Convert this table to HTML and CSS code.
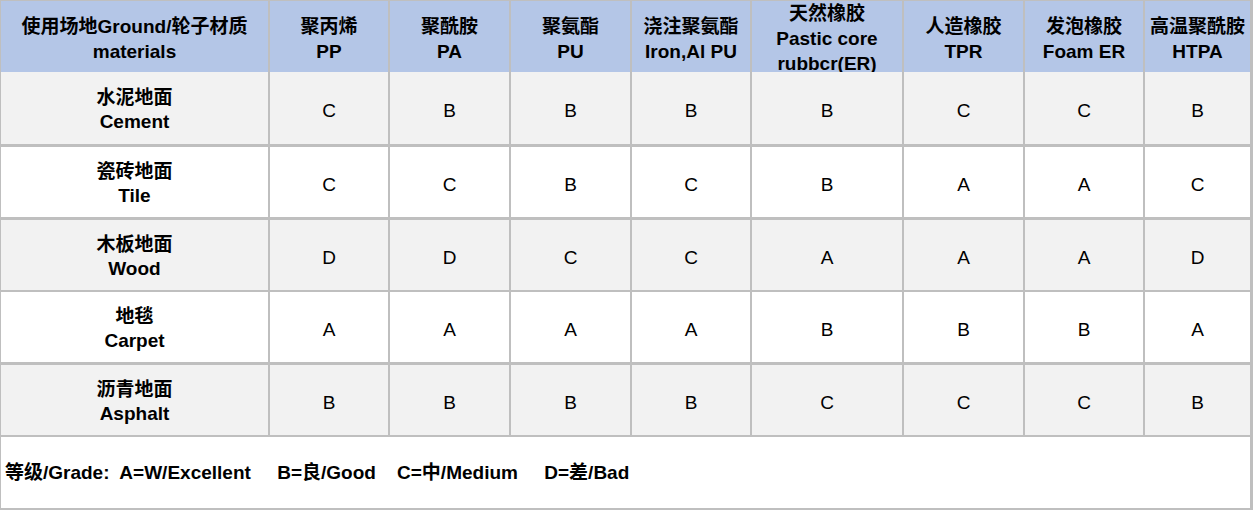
FILE: index.html
```html
<!DOCTYPE html>
<html lang="zh-CN">
<head>
<meta charset="utf-8">
<title>Ground / wheel materials</title>
<link rel="stylesheet" href="styles.css">
</head>
<body>
<div class="table">
  <div class="row head">
    <div class="cell">使用场地Ground/轮子材质<br>materials</div>
    <div class="cell">聚丙烯<br>PP</div>
    <div class="cell">聚酰胺<br>PA</div>
    <div class="cell">聚氨酯<br>PU</div>
    <div class="cell">浇注聚氨酯<br>Iron,Al PU</div>
    <div class="cell">天然橡胶<br>Pastic core<br>rubbcr(ER)</div>
    <div class="cell">人造橡胶<br>TPR</div>
    <div class="cell">发泡橡胶<br>Foam ER</div>
    <div class="cell">高温聚酰胺<br>HTPA</div>
  </div>
  <div class="row body grey first">
    <div class="cell label">水泥地面<br>Cement</div>
    <div class="cell">C</div><div class="cell">B</div><div class="cell">B</div><div class="cell">B</div><div class="cell">B</div><div class="cell">C</div><div class="cell">C</div><div class="cell">B</div>
  </div>
  <div class="row body white wide">
    <div class="cell label">瓷砖地面<br>Tile</div>
    <div class="cell">C</div><div class="cell">C</div><div class="cell">B</div><div class="cell">C</div><div class="cell">B</div><div class="cell">A</div><div class="cell">A</div><div class="cell">C</div>
  </div>
  <div class="row body grey wide">
    <div class="cell label">木板地面<br>Wood</div>
    <div class="cell">D</div><div class="cell">D</div><div class="cell">C</div><div class="cell">C</div><div class="cell">A</div><div class="cell">A</div><div class="cell">A</div><div class="cell">D</div>
  </div>
  <div class="row body white narrow">
    <div class="cell label">地毯<br>Carpet</div>
    <div class="cell">A</div><div class="cell">A</div><div class="cell">A</div><div class="cell">A</div><div class="cell">B</div><div class="cell">B</div><div class="cell">B</div><div class="cell">A</div>
  </div>
  <div class="row body grey wide">
    <div class="cell label">沥青地面<br>Asphalt</div>
    <div class="cell">B</div><div class="cell">B</div><div class="cell">B</div><div class="cell">B</div><div class="cell">C</div><div class="cell">C</div><div class="cell">C</div><div class="cell">B</div>
  </div>
  <div class="foot narrow">等级/Grade:  A=W/Excellent     B=良/Good    C=中/Medium     D=差/Bad</div>
</div>
</body>
</html>
```

FILE: styles.css
```css
html, body {
  margin: 0;
  padding: 0;
  background: #ffffff;
}

body {
  font-family: "Liberation Sans", Arial, "Noto Sans CJK SC", sans-serif;
  font-size: 19px;
  color: #000000;
}

.table {
  width: 1253px;
  box-sizing: border-box;
  background: #bfbfbf;
  padding: 1px 3px 2px 1px;
  display: flex;
  flex-direction: column;
}

.row {
  display: grid;
  grid-template-columns: 267px 118px 119px 119px 118px 150px 119px 118px 105px;
  column-gap: 2px;
  height: 70px;
}

.row.head {
  height: 71px;
}

.row.first {
  height: 72px;
}

.wide {
  margin-top: 3px;
}

.narrow {
  margin-top: 2px;
}

.cell {
  display: flex;
  align-items: center;
  justify-content: center;
  text-align: center;
  line-height: 25px;
  overflow: visible;
  box-sizing: border-box;
}

.body .cell {
  padding-top: 4px;
}

.head .cell {
  background: #b4c6e7;
  font-weight: bold;
}

.grey .cell {
  background: #f2f2f2;
}

.white .cell {
  background: #ffffff;
}

.cell.label {
  font-weight: bold;
  line-height: 24px;
}

.foot {
  height: 71px;
  box-sizing: border-box;
  background: #ffffff;
  display: flex;
  align-items: center;
  padding-left: 4px;
  padding-bottom: 5px;
  font-weight: bold;
  white-space: pre;
}
```
